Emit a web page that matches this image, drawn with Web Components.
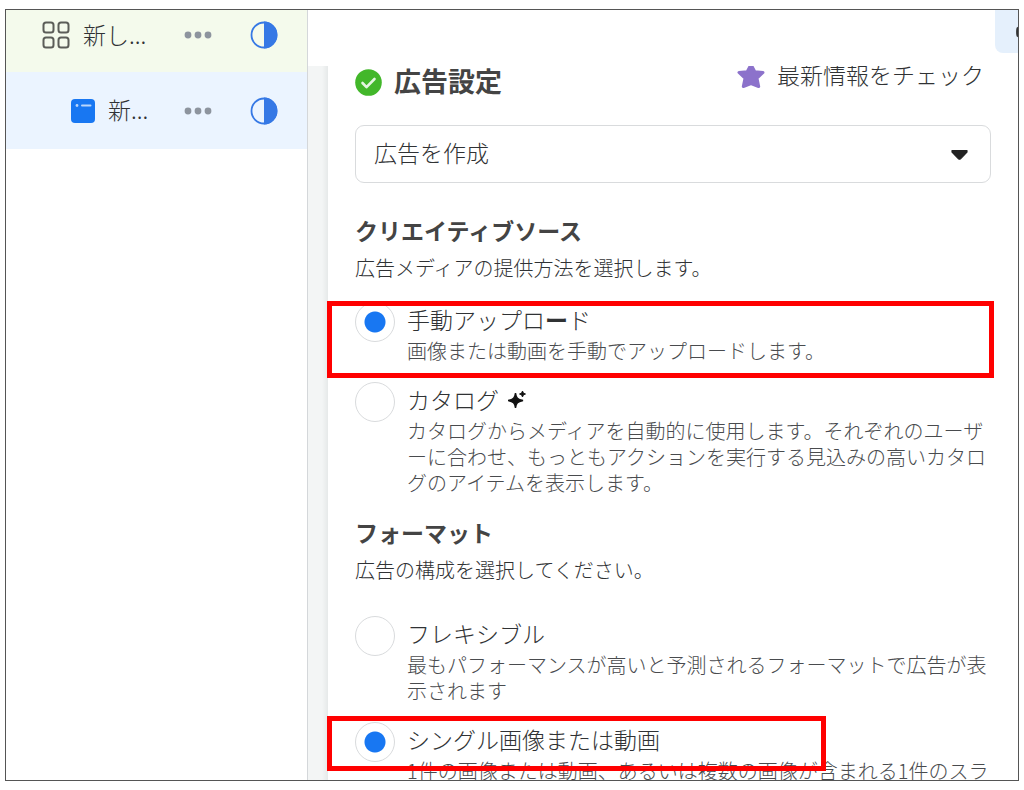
<!DOCTYPE html>
<html lang="ja">
<head>
<meta charset="utf-8">
<meta name="viewport" content="width=device-width, initial-scale=1">
<title>広告設定</title>
<style>
  html, body { height: 100%; }
  body {
    margin: 0; padding: 9px 5px; box-sizing: border-box; background: #fff; color: #303234;
    font: 300 20px/26px "Noto Sans CJK JP", sans-serif;
  }
  b { font-weight: 700; }
  .sparkle { margin-left: 4px; }
</style>
</head>
<body>
<ads-window>
  <tree-row slot="tree" class="set" name="新し...">
    <svg slot="icon" width="28" height="28" viewBox="0 0 28 28" fill="none" stroke="#5b5d58" stroke-width="2"><rect x="1.5" y="1.5" width="10" height="10" rx="2.5"/><rect x="16.5" y="1.5" width="10" height="10" rx="2.5"/><rect x="1.5" y="16.5" width="10" height="10" rx="2.5"/><rect x="16.5" y="16.5" width="10" height="10" rx="2.5"/></svg>
  </tree-row>
  <tree-row slot="tree" name="新...">
    <svg slot="icon" width="24" height="24" viewBox="0 0 24 24"><rect width="24" height="24" rx="4" fill="#1877f2"/><circle cx="6" cy="6.5" r="1.4" fill="#b9d6fb"/><path d="M11 6.5h8.5" stroke="#b9d6fb" stroke-width="2" stroke-linecap="round"/></svg>
  </tree-row>

  <panel-header></panel-header>
  <creation-select></creation-select>

  <option-group heading="クリエイティブソース" note="広告メディアの提供方法を選択します。">
    <radio-option class="marked-wide" checked>
      <span slot="title">手動アップロ<b>ー</b>ド</span>
      画像または動画を手動でアップロードします。
    </radio-option>
    <radio-option>
      <span slot="title">カタログ <svg class="sparkle" width="18" height="18" viewBox="0 0 18 18" fill="#111"><path d="M7.5 2C8.2 7 9.5 8.3 15 9.5 9.5 10.7 8.2 12 7.5 17 6.8 12 5.5 10.7 0 9.5 5.5 8.3 6.8 7 7.5 2Z" stroke="#111" stroke-width="1.4"/><path d="M14.5 0l.9 2.1 2.1.9-2.1.9-.9 2.1-.9-2.1-2.1-.9 2.1-.9z" stroke="#111" stroke-width=".9"/></svg></span>
      カタログからメディアを自動的に使用します。それぞれのユーザーに合わせ、もっともアクションを実行する見込みの高いカタログのアイテムを表示します。
    </radio-option>
  </option-group>

  <option-group class="spaced" heading="フォーマット" note="広告の構成を選択してください。">
    <radio-option>
      <span slot="title">フレキシブル</span>
      最もパフォーマンスが高いと予測されるフォーマットで広告が表示されます
    </radio-option>
    <radio-option class="marked-short" checked>
      <span slot="title">シングル画像または動画</span>
      1件の画像または動画、あるいは複数の画像が含まれる1件のスラ
    </radio-option>
  </option-group>
</ads-window>

<script>
const define = (name, html, setup) => {
  const template = document.createElement('template');
  template.innerHTML = html;
  customElements.define(name, class extends HTMLElement {
    constructor() {
      super();
      this.attachShadow({ mode: 'open' }).append(template.content.cloneNode(true));
    }
    connectedCallback() { if (setup) setup(this, this.shadowRoot); }
  });
};

define('ads-window', `
<style>
  :host { display: grid; grid-template-columns: 302px minmax(0, 1fr); height: 100%; box-sizing: border-box;
    border: 1px solid #555; overflow: hidden; background: #fff; }
  nav { border-right: 1px solid #d4d7da; box-sizing: border-box; }
  main { display: flex; flex-direction: column; min-height: 0; }
  header { flex: none; height: 56px; display: flex; justify-content: flex-end; }
  button { width: 23px; height: 43px; padding: 0; border: 0; border-radius: 0 0 0 8px; background: #e5f0fc;
    display: flex; align-items: center; justify-content: flex-end; }
  .scroll { flex: 1; min-height: 0; overflow: hidden; padding-left: 20px;
    background: linear-gradient(90deg, #f3f5f5 14px, #e6e9e9 20px); }
  .panel { min-height: 100%; box-sizing: border-box; padding: 0 27px; background: #fff; }
</style>
<nav aria-label="キャンペーン"><slot name="tree"></slot></nav>
<main>
  <header><button type="button" aria-label="表示を切り替え"><svg width="2" height="12" viewBox="0 0 2 12"><path d="M2 1.5C.8 2.5.8 9.5 2 10.5" fill="none" stroke="#333" stroke-width="2"/></svg></button></header>
  <div class="scroll"><div class="panel"><slot></slot></div></div>
</main>`);

define('tree-row', `
<style>
  :host { display: flex; align-items: center; height: 77px; box-sizing: border-box; padding: 0 29px 0 65px; gap: 13px; background: #ebf4ff; }
  :host(.set) { height: 62px; padding: 0 29px 12px 36px; background: #f4faec; }
  ::slotted(svg) { flex: none; display: block; }
  span { flex: 1; padding-bottom: 3px; font-size: 23px; line-height: 34px; white-space: nowrap; }
  button { border: 0; background: none; padding: 0; display: flex; margin-right: 25px; }
  svg { display: block; flex: none; }
</style>
<slot name="icon"></slot><span></span>
<button type="button" aria-label="その他"><svg width="28" height="8" viewBox="0 0 28 8" fill="#8d949e"><circle cx="4" cy="4" r="3.4"/><circle cx="14" cy="4" r="3.4"/><circle cx="24" cy="4" r="3.4"/></svg></button>
<svg width="28" height="28" viewBox="0 0 28 28" role="img" aria-label="下書き"><circle cx="14" cy="14" r="12.5" fill="none" stroke="#3578e5" stroke-width="1.8"/><path d="M14 .6a13.400 13.400 0 0 1 0 26.800z" fill="#3578e5"/></svg>`,
(el, root) => { root.querySelector('span').textContent = el.getAttribute('name'); });

define('panel-header', `
<style>
  :host { display: flex; justify-content: space-between; align-items: flex-start; height: 30px; margin-bottom: 29px; }
  h1 { display: flex; align-items: center; gap: 12px; margin: 0; font-size: 27px; line-height: 30px; font-weight: 700; color: #444; }
  h1 span { padding-bottom: 2px; }
  a { display: flex; align-items: center; gap: 12px; height: 18px; padding-right: 7px; color: inherit; text-decoration: none; font-size: 23px; line-height: 18px; }
  a span { padding-bottom: 3px; }
  svg { display: block; flex: none; }
</style>
<h1><svg width="27" height="27" viewBox="0 0 27 27"><circle cx="13.5" cy="13.5" r="13.3" fill="#42b72a"/><path d="M7.5 14l4 4.2 8-8.2" fill="none" stroke="#e4f5e0" stroke-width="2.6" stroke-linecap="round" stroke-linejoin="round"/></svg><span>広告設定</span></h1>
<a href="#updates"><svg width="28" height="28" viewBox="0 0 28 28"><path d="M14 3.500l3.800 7.200 8.200.8-6 5.700 1.700 8.300L14 22.500l-7.700 3 1.700-8.300L2 11.500l8.200-.8z" fill="#8c72cb" stroke="#8c72cb" stroke-width="3" stroke-linejoin="round"/></svg><span>最新情報をチェック</span></a>`);

define('creation-select', `
<style>
  :host { display: block; position: relative; margin-bottom: 30px; }
  select { appearance: none; display: block; width: 100%; height: 58px; box-sizing: border-box; padding: 0 48px 4px 18px;
    border: 1px solid #d9dbdd; border-radius: 9px; background: #fff; color: inherit; font: inherit; font-size: 23px; }
  svg { position: absolute; right: 22px; top: 24px; pointer-events: none; }
</style>
<select aria-label="広告設定"><option>広告を作成</option></select>
<svg width="19" height="12" viewBox="0 0 19 12"><path d="M2 1.5h15v1.5L10.5 9.8q-1 .8-2 0L2 3z" fill="#222" stroke="#222" stroke-width="1.2" stroke-linejoin="round"/></svg>`);

define('option-group', `
<style>
  :host { display: block; }
  :host(.spaced) { margin-top: 19px; --list-gap: 33px; }
  h2 { margin: 0 0 8px; font-size: 23px; line-height: 34px; font-weight: 700; color: #444; }
  p { margin: 0 0 var(--list-gap, 21px); }
  div { display: grid; gap: 18px; }
</style>
<h2 id="heading"></h2><p></p>
<div role="radiogroup" aria-labelledby="heading"><slot></slot></div>`,
(el, root) => {
  root.querySelector('h2').textContent = el.getAttribute('heading');
  root.querySelector('p').textContent = el.getAttribute('note');
  el.addEventListener('picked', e => {
    for (const option of el.querySelectorAll('radio-option'))
      if (option !== e.target) option.shadowRoot.querySelector('input').checked = false;
  });
});

define('radio-option', `
<style>
  :host { display: block; position: relative; }
  label { display: grid; grid-template-columns: 40px minmax(0, 1fr); column-gap: 12px; align-items: start; }
  input { appearance: none; margin: 0; width: 40px; height: 40px; box-sizing: border-box; border: 1px solid #d9dbdd; border-radius: 50%; background: #fff; }
  input:checked { background: radial-gradient(circle, #1877f2 10px, #fff 11px); }
  .title { display: block; padding-bottom: 2px; font-size: 23px; line-height: 34px; }
  .note { display: block; line-break: anywhere; color: #494b4e; }
  :host(.marked-wide)::after, :host(.marked-short)::after { content: ""; position: absolute; box-sizing: border-box; border: 5px solid #f00; pointer-events: none; left: -28px; }
  :host(.marked-wide)::after { top: -1px; right: -3px; height: 77px; }
  :host(.marked-short)::after { top: -6px; width: 499px; height: 55px; }
</style>
<label><input type="radio"><span class="text"><span class="title"><slot name="title"></slot></span><span class="note"><slot></slot></span></span></label>`,
(el, root) => {
  const input = root.querySelector('input');
  input.checked = el.hasAttribute('checked');
  input.addEventListener('change', () => el.dispatchEvent(new CustomEvent('picked', { bubbles: true })));
});
</script>
</body>
</html>
